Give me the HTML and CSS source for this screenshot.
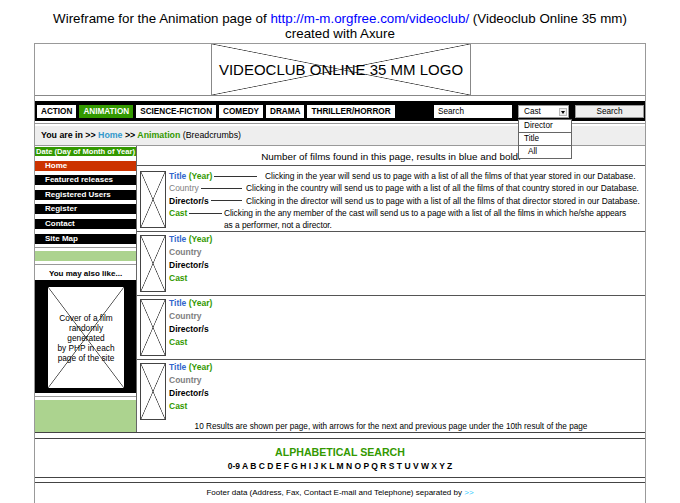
FILE: index.html
```html
<!DOCTYPE html>
<html lang="en">

<head>
    <meta charset="UTF-8">
    <title>Wireframe - Videoclub Online 35 mm - Animation</title>
    <link rel="stylesheet" href="styles.css">
</head>

<body>
    <p class="caption">Wireframe for the Animation page of <a href="#">http://m-m.orgfree.com/videoclub/</a> (Videoclub Online 35 mm)<br>created with Axure</p>
    <div id="page">
        <div id="header">
            <div class="logo xbox">VIDEOCLUB ONLINE 35 MM LOGO</div>
        </div>
        <div id="navbar">
            <span class="genre">ACTION</span>
            <span class="genre active">ANIMATION</span>
            <span class="genre">SCIENCE-FICTION</span>
            <span class="genre">COMEDY</span>
            <span class="genre">DRAMA</span>
            <span class="genre">THRILLER/HORROR</span>
            <span class="searchField">Search</span>
            <span class="select">Cast<span class="arrow"></span>
                <ul class="options">
                    <li>Director</li>
                    <li>Title</li>
                    <li class="all">All</li>
                </ul>
            </span>
            <span class="searchBtn">Search</span>
        </div>
        <div class="rule"></div>
        <div id="breadcrumbs">You are in &gt;&gt; <a href="#" class="home">Home</a> &gt;&gt; <span class="current">Animation</span> <span class="note">(Breadcrumbs)</span></div>
        <div id="content">
            <div id="sidebar">
                <div class="date">Date (Day of Month of Year)</div>
                <a href="#" class="menu home">Home</a>
                <a href="#" class="menu">Featured releases</a>
                <a href="#" class="menu">Registered Users</a>
                <a href="#" class="menu">Register</a>
                <a href="#" class="menu">Contact</a>
                <a href="#" class="menu">Site Map</a>
                <div class="sep"></div>
                <div class="greenBox"></div>
                <div class="sep"></div>
                <div class="alsoLike">You may also like...</div>
                <div class="coverWrap">
                    <div class="cover xbox">Cover of a film<br>randomly<br>generated<br>by PHP in each<br>page of the site</div>
                </div>
                <div class="sep"></div>
                <div class="greenBox last"></div>
            </div>
            <div id="main">
                <div class="count">Number of films found in this page, results in blue and bold.</div>
                <div class="film first">
                    <div class="poster xbox"></div>
                    <div class="info">
                        <div class="line"><span class="key k1"><span class="title">Title</span>&nbsp;<span class="year">(Year)</span><i class="lead"></i></span><span class="desc d1">Clicking in the year will send us to page with a list of all the films of that year stored in our Database.</span></div>
                        <div class="line"><span class="key k2"><span class="country plain">Country</span><i class="lead"></i></span><span class="desc d2">Clicking in the country will send us to page with a list of all the films of that country stored in our Database.</span></div>
                        <div class="line"><span class="key k2"><span class="director">Director/s</span><i class="lead"></i></span><span class="desc d2">Clicking in the director will send us to page with a list of all the films of that director stored in our Database.</span></div>
                        <div class="line"><span class="key k4"><span class="cast">Cast</span><i class="lead"></i></span><span class="desc d4">Clicking in the any member of the cast will send us to a page with a list of all the films in which he/she appears as a performer, not a director.</span></div>
                    </div>
                </div>
                <div class="film">
                    <div class="poster xbox"></div>
                    <div class="info">
                        <div><span class="title">Title</span> <span class="year">(Year)</span></div>
                        <div class="country">Country</div>
                        <div class="director">Director/s</div>
                        <div class="cast">Cast</div>
                    </div>
                </div>
                <div class="film">
                    <div class="poster xbox"></div>
                    <div class="info">
                        <div><span class="title">Title</span> <span class="year">(Year)</span></div>
                        <div class="country">Country</div>
                        <div class="director">Director/s</div>
                        <div class="cast">Cast</div>
                    </div>
                </div>
                <div class="film lastFilm">
                    <div class="poster xbox"></div>
                    <div class="info">
                        <div><span class="title">Title</span> <span class="year">(Year)</span></div>
                        <div class="country">Country</div>
                        <div class="director">Director/s</div>
                        <div class="cast">Cast</div>
                    </div>
                </div>
                <div class="perPage">10 Results are shown per page, with arrows for the next and previous page under the 10th result of the page</div>
            </div>
        </div>
        <div id="alphabet">
            <p class="alphaHeading">ALPHABETICAL SEARCH</p>
            <p class="letters">0-9 A B C D E F G H I J K L M N O P Q R S T U V W X Y Z</p>
        </div>
        <div id="footer">Footer data (Address, Fax, Contact E-mail and Telephone) separated by <span class="arrows">&gt;&gt;</span></div>
    </div>
</body>

</html>
```

FILE: styles.css
```css
body {
    margin: 0;
    font-family: "Liberation Sans", Arial, sans-serif;
    color: #000;
    background: #fff;
}

.caption {
    margin: 0;
    padding-top: 11px;
    text-align: center;
    font-size: 13.35px;
    line-height: 15px;
}

.caption a {
    color: #0000ff;
    text-decoration: none;
}

#page {
    width: 610px;
    margin: 2px 0 0 34px;
    border: 1px solid #999;
    border-bottom: none;
}

/* X drawn across a placeholder box */
.xbox {
    background:
        linear-gradient(to top right, transparent calc(50% - 0.7px), #444 50%, transparent calc(50% + 0.7px)),
        linear-gradient(to bottom right, transparent calc(50% - 0.7px), #444 50%, transparent calc(50% + 0.7px)),
        #fff;
}

#header {
    height: 51px;
    border-bottom: 1px solid #888;
}

.logo {
    width: 258px;
    height: 51px;
    margin-left: 176px;
    border-left: 1px solid #888;
    border-right: 1px solid #888;
    display: flex;
    align-items: center;
    justify-content: center;
    font-size: 15px;
    white-space: nowrap;
}

#navbar {
    margin-top: 5px;
    height: 20px;
    background: #000;
    display: flex;
    align-items: center;
    gap: 3px;
    padding: 0 1px 0 2px;
    font-size: 8.2px;
}

#navbar .genre {
    background: #fff;
    height: 13px;
    line-height: 13px;
    padding: 0 4px;
    font-weight: bold;
}

#navbar .genre.active {
    background: #339900;
    color: #fff;
}

.searchField {
    margin-left: auto;
    margin-right: 3px;
    width: 74px;
    height: 13px;
    line-height: 13px;
    padding-left: 4px;
    background: #fff;
}

.select {
    position: relative;
    width: 51px;
    height: 13px;
    line-height: 12px;
    padding-left: 5px;
    background: #fff;
    border: 1px solid #999;
    box-sizing: border-box;
    margin-right: 3px;
}

.select .arrow {
    position: absolute;
    right: 1px;
    top: 2px;
    width: 8px;
    height: 8px;
    background: #eee;
    border: 1px solid #bbb;
    box-sizing: border-box;
}

.select .arrow::after {
    content: "";
    position: absolute;
    left: 1px;
    top: 2px;
    border-left: 2px solid transparent;
    border-right: 2px solid transparent;
    border-top: 3px solid #000;
}

.select .options {
    position: absolute;
    left: -1px;
    top: 13px;
    width: 52px;
    margin: 0;
    padding: 0;
    list-style: none;
    background: #fff;
    border: 1px solid #666;
    z-index: 2;
}

.select .options li {
    height: 12px;
    line-height: 12px;
    padding-left: 5px;
    border-top: 1px solid #666;
}

.select .options li:first-child {
    border-top: none;
}

.select .options li.all {
    padding-left: 9px;
}

.searchBtn {
    width: 69px;
    height: 13px;
    line-height: 12px;
    text-align: center;
    background: #eee;
    border: 1px solid #999;
    box-sizing: border-box;
}

.rule {
    margin-top: 2px;
    border-top: 1px solid #999;
}

#breadcrumbs {
    margin-top: 2px;
    height: 19px;
    line-height: 19px;
    padding-left: 6px;
    background: #eee;
    border-bottom: 1px solid #999;
    font-size: 8.8px;
    font-weight: bold;
}

#breadcrumbs a.home {
    color: #3399cc;
    text-decoration: none;
}

#breadcrumbs .current {
    color: #339900;
}

#breadcrumbs .note {
    font-weight: normal;
}

#content {
    display: grid;
    grid-template-columns: 102px 1fr;
    border-bottom: 1px solid #444;
}

#sidebar {
    display: flex;
    flex-direction: column;
    border-right: 1px solid #666;
    padding-top: 1px;
    font-size: 8px;
    font-weight: bold;
}

#sidebar .date {
    height: 9px;
    line-height: 9px;
    background: #339900;
    color: #fff;
    font-size: 7.6px;
    padding-left: 1px;
    white-space: nowrap;
}

#sidebar .menu {
    display: block;
    margin-top: 4.6px;
    height: 10px;
    line-height: 10px;
    padding-left: 10px;
    background: #000;
    color: #fff;
    text-decoration: none;
}

#sidebar .menu.home {
    background: #cc3300;
}

#sidebar .sep {
    margin-top: 3px;
    border-top: 1px solid #999;
}

#sidebar .greenBox {
    margin-top: 3px;
    height: 10px;
    background: #acd38f;
}

#sidebar .greenBox.last {
    flex: 1;
}

#sidebar .alsoLike {
    margin-top: 2px;
    height: 12px;
    line-height: 14px;
    text-align: center;
}

.coverWrap {
    margin-top: 1px;
    height: 113px;
    background: #000;
    padding: 7px 0 0 13px;
    box-sizing: border-box;
}

.cover {
    width: 76px;
    height: 101px;
    box-sizing: border-box;
    padding-top: 26px;
    text-align: center;
    font-size: 8.3px;
    font-weight: normal;
    line-height: 10.2px;
}

#main {
    font-size: 8.5px;
}

.count {
    height: 20px;
    line-height: 20px;
    padding-top: 1px;
    box-sizing: border-box;
    text-align: center;
    font-size: 9.9px;
    border-bottom: 1px solid #555;
}

.film {
    display: flex;
    height: 63px;
    border-bottom: 1px solid #555;
    padding-left: 3px;
}

.film.first {
    height: 65px;
}

.film.lastFilm {
    border-bottom: none;
    height: 62px;
}

.poster {
    width: 26px;
    height: 57px;
    margin-top: 3px;
    border: 1px solid #444;
    box-sizing: border-box;
    flex-shrink: 0;
}

.film.first .poster {
    margin-top: 5px;
}

.info {
    margin-left: 3px;
    padding-top: 1px;
    line-height: 13px;
    font-weight: bold;
}

.film.first .info {
    padding-top: 4px;
    line-height: 12.3px;
    font-weight: normal;
    font-size: 8.4px;
}

.title {
    color: #3366cc;
    font-weight: bold;
}

.year {
    color: #339900;
    font-weight: bold;
}

.country {
    color: #808080;
}

.country.plain {
    font-weight: normal;
}

.director {
    font-weight: bold;
}

.cast {
    color: #339900;
    font-weight: bold;
}

.film.first .title,
.film.first .year,
.film.first .director,
.film.first .cast,
.film.first .country {
    font-size: 8.5px;
}

.line {
    display: flex;
    align-items: flex-start;
}

.key {
    display: flex;
    align-items: center;
    flex-shrink: 0;
    height: 12.3px;
}

.key .lead {
    flex: 1;
    border-top: 1px solid #333;
    margin-left: 2px;
}

.k1 {
    width: 88px;
}

.k2 {
    width: 73px;
}

.k4 {
    width: 53px;
}

.d1 {
    padding-left: 8px;
}

.d2 {
    padding-left: 4px;
}

.d4 {
    padding-left: 2px;
    width: 410px;
    flex-shrink: 0;
    letter-spacing: -0.05px;
}

.perPage {
    height: 10px;
    line-height: 10px;
    text-align: center;
    font-size: 8.2px;
}

#alphabet {
    margin-top: 5px;
    height: 31px;
    border-top: 1px solid #444;
    border-bottom: 1px solid #444;
    text-align: center;
    padding-top: 7px;
}

#alphabet p {
    margin: 0;
}

.alphaHeading {
    font-size: 10.6px;
    line-height: 13px;
    font-weight: bold;
    color: #339900;
}

.letters {
    font-size: 8.5px;
    line-height: 15px;
    font-weight: bold;
}

#footer {
    margin-top: 4px;
    border-top: 1px solid #444;
    height: 25px;
    padding-top: 4px;
    line-height: 11px;
    text-align: center;
    font-size: 8px;
}

#footer .arrows {
    color: #33ccff;
}
```
